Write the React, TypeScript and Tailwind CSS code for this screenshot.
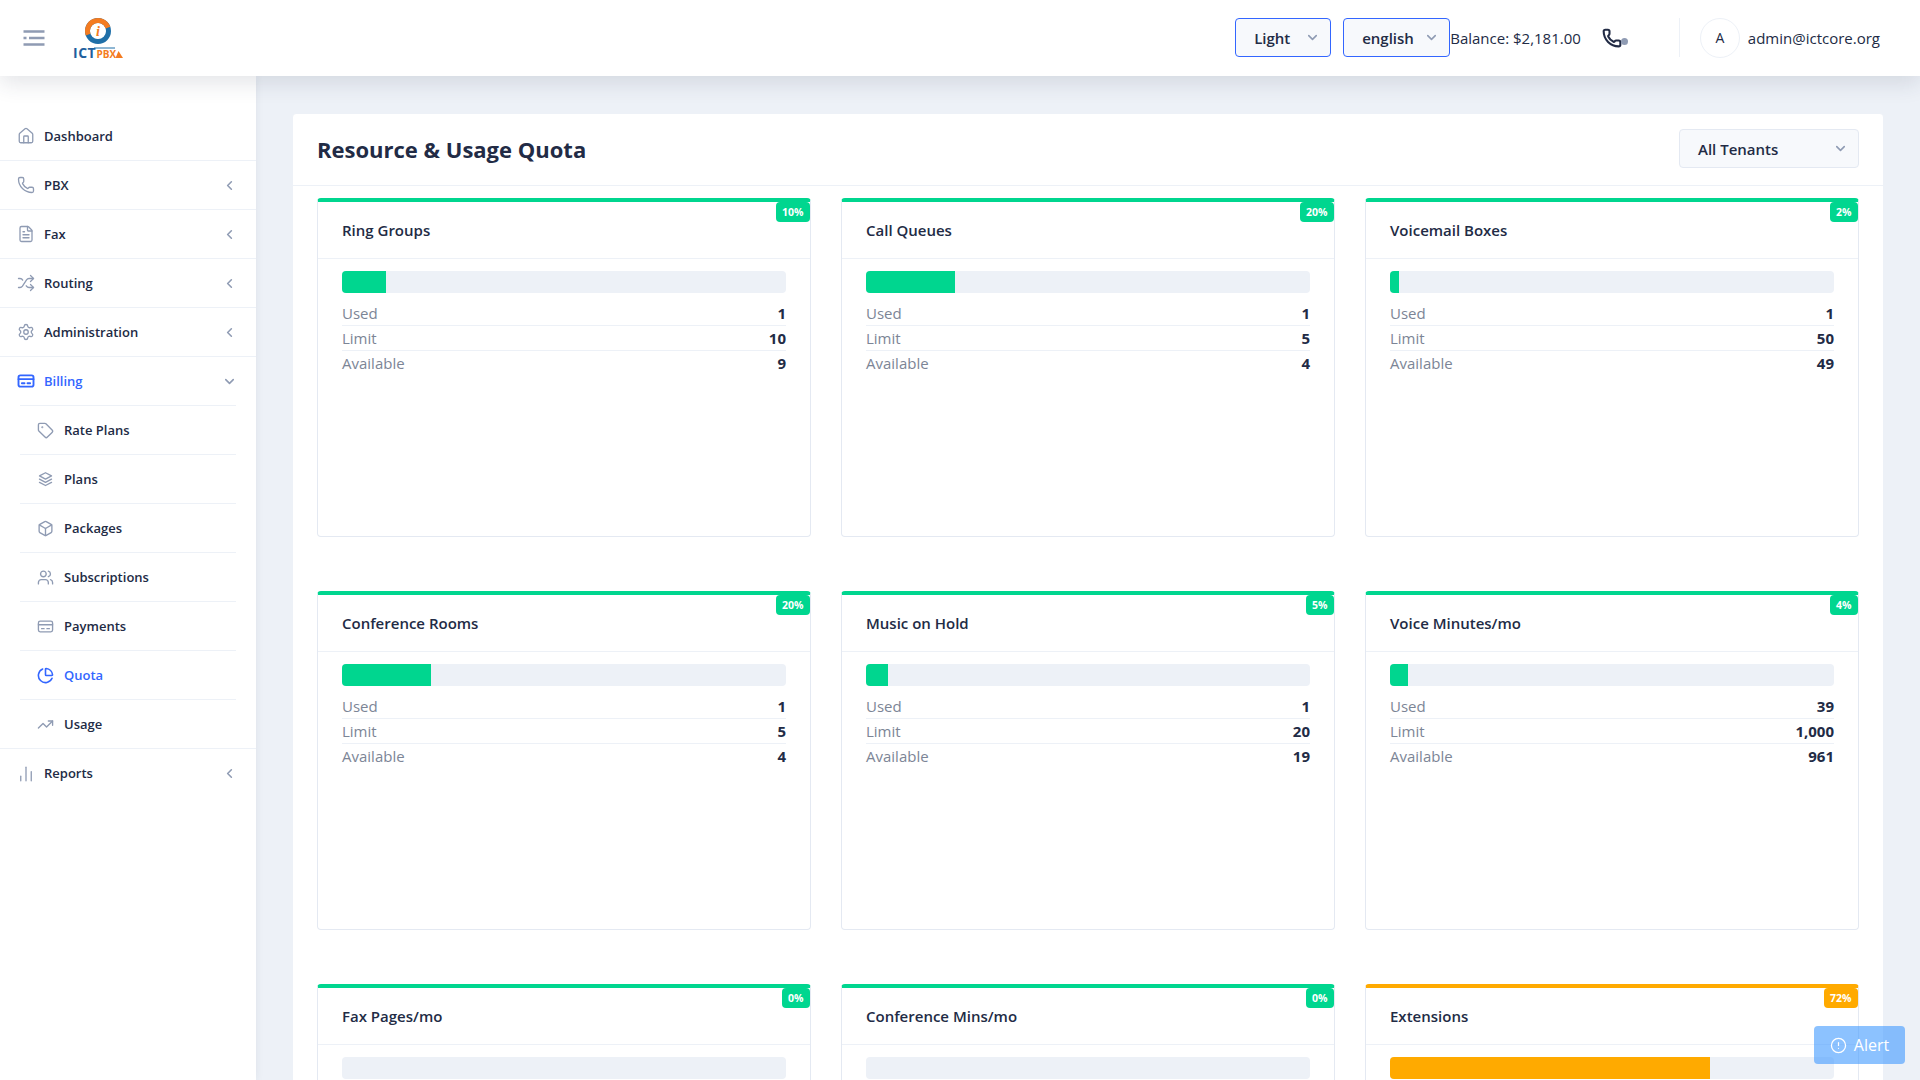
import React from 'react';
import {
  AlertCircle,
  BarChart2,
  Box,
  ChevronDown,
  ChevronLeft,
  FileText,
  Home,
  Phone,
  PieChart,
  Settings,
  Shuffle,
  Tag,
  TrendingUp,
  Users,
} from 'lucide-react';

const FONT = 'font-["Open_Sans",sans-serif]';

type IconProps = { size?: number; strokeWidth?: number; className?: string };

const CardIcon = ({ size = 18, strokeWidth = 2, className }: IconProps) => (
  <svg width={size} height={size} viewBox="0 0 24 24" fill="none" stroke="currentColor" strokeWidth={strokeWidth} strokeLinecap="round" strokeLinejoin="round" className={className}>
    <rect x="2" y="4.5" width="20" height="15" rx="2.5" />
    <path d="M2 9.5h20M6.5 15h3.5M14 15h3.5" />
  </svg>
);

const StackIcon = ({ size = 18, strokeWidth = 2, className }: IconProps) => (
  <svg width={size} height={size} viewBox="0 0 24 24" fill="none" stroke="currentColor" strokeWidth={strokeWidth} strokeLinecap="round" strokeLinejoin="round" className={className}>
    <path d="M12 2.5 20.5 7 12 11.5 3.5 7z" />
    <path d="M3.5 11.5 12 16l8.5-4.5" />
    <path d="M3.5 16 12 20.5l8.5-4.5" />
  </svg>
);

const topItems = [
  { label: 'Dashboard', icon: Home },
  { label: 'PBX', icon: Phone, arrow: true },
  { label: 'Fax', icon: FileText, arrow: true },
  { label: 'Routing', icon: Shuffle, arrow: true },
  { label: 'Administration', icon: Settings, arrow: true },
];

const billingItems = [
  { label: 'Rate Plans', icon: Tag },
  { label: 'Plans', icon: StackIcon },
  { label: 'Packages', icon: Box },
  { label: 'Subscriptions', icon: Users },
  { label: 'Payments', icon: CardIcon },
  { label: 'Quota', icon: PieChart, active: true },
  { label: 'Usage', icon: TrendingUp },
];

const quotas = [
  { title: 'Ring Groups', pct: 10, used: '1', limit: '10', available: '9' },
  { title: 'Call Queues', pct: 20, used: '1', limit: '5', available: '4' },
  { title: 'Voicemail Boxes', pct: 2, used: '1', limit: '50', available: '49' },
  { title: 'Conference Rooms', pct: 20, used: '1', limit: '5', available: '4' },
  { title: 'Music on Hold', pct: 5, used: '1', limit: '20', available: '19' },
  { title: 'Voice Minutes/mo', pct: 4, used: '39', limit: '1,000', available: '961' },
  { title: 'Fax Pages/mo', pct: 0, used: '0', limit: '100', available: '100' },
  { title: 'Conference Mins/mo', pct: 0, used: '0', limit: '100', available: '100' },
  { title: 'Extensions', pct: 72, used: '36', limit: '50', available: '14', warn: true },
];

const Logo = () => (
  <svg width="52" height="44" viewBox="0 0 52 44" className="ml-[26px]">
    <circle cx="26" cy="15" r="10.5" fill="none" stroke="#1f6fa8" strokeWidth="5" />
    <circle cx="26" cy="15" r="10.5" fill="none" stroke="#f47b20" strokeWidth="5" strokeDasharray="33 33" transform="rotate(160 26 15)" />
    <circle cx="26" cy="15" r="7.5" fill="#fff" />
    <text x="26" y="20" textAnchor="middle" fontSize="14" fontWeight="700" fontStyle="italic" fill="#f47b20" fontFamily="Liberation Serif, serif">i</text>
    <text x="1" y="42" fontSize="14" fontWeight="700" fill="#1f5f9e" fontFamily="Open Sans, sans-serif" letterSpacing="0.5">ICT</text>
    <text x="24.5" y="42" fontSize="10" fontWeight="700" fill="#f47b20" fontFamily="Open Sans, sans-serif">PBX</text>
    <path d="M22 32h21" stroke="#1f6fa8" strokeWidth="1" />
    <path d="M43.5 42l3-7 4.5 7z" fill="#f47b20" />
  </svg>
);

const Select = ({ label, width, focus }: { label: string; width: string; focus?: boolean }) => (
  <div
    className={`flex h-[39px] items-center justify-between rounded-[4px] border bg-[#f7f9fc] pl-[18px] pr-[10px] text-[15px] font-semibold text-[#222b45] ${width} ${
      focus ? 'border-[#3366ff]' : 'border-[#e4e9f2]'
    }`}
  >
    <span className="pt-px">{label}</span>
    <ChevronDown size={15} strokeWidth={2.5} className="text-[#8f9bb3]" />
  </div>
);

const StatRow = ({ label, value, last }: { label: string; value: string; last?: boolean }) => (
  <div className={`flex h-[25px] items-center justify-between text-[15px] ${last ? '' : 'border-b border-[#edf1f7]'}`}>
    <span className="text-[#7c8596]">{label}</span>
    <span className="font-bold text-[#222b45]">{value}</span>
  </div>
);

const QuotaCard = ({ q }: { q: (typeof quotas)[number] }) => (
  <div className={`relative h-[339px] rounded-[4px] border border-t-4 border-[#e4e9f2] bg-white ${q.warn ? 'border-t-[#ffaa00]' : 'border-t-[#00d68f]'}`}>
    <span className={`absolute right-0 top-0 rounded-[4px] px-[6.5px] py-[3px] text-[10.5px] font-bold leading-[14px] text-white ${q.warn ? 'bg-[#ffaa00]' : 'bg-[#00d68f]'}`}>
      {q.pct}%
    </span>
    <div className="flex h-[57px] items-center border-b border-[#edf1f7] px-6 text-[15px] font-semibold text-[#222b45]">{q.title}</div>
    <div className="px-6 pt-3">
      <div className="h-[22px] overflow-hidden rounded-[4px] bg-[#edf1f7]">
        <div className={`h-full ${q.warn ? 'bg-[#ffaa00]' : 'bg-[#00d68f]'}`} style={{ width: `${q.pct}%` }} />
      </div>
      <div className="mt-[8px]">
        <StatRow label="Used" value={q.used} />
        <StatRow label="Limit" value={q.limit} />
        <StatRow label="Available" value={q.available} last />
      </div>
    </div>
  </div>
);

export default function App() {
  return (
    <div className={`relative flex h-screen flex-col overflow-hidden bg-[#edf1f7] ${FONT}`}>
      <header className="relative z-10 flex h-[76px] shrink-0 items-center bg-white pb-px pr-[40px] shadow-[0_8px_20px_rgba(44,51,73,0.12)]">
        <svg width="24" height="24" viewBox="0 0 24 24" className="ml-[22px] text-[#8f9bb3]" fill="none" stroke="currentColor" strokeWidth="2.4">
          <path d="M1.5 5.5h21M1.5 12h3M7 12h15.5M1.5 18.5h21" />
        </svg>
        <Logo />
        <div className="ml-auto flex items-center text-[15px] text-[#222b45]">
          <Select label="Light" width="w-[96px]" focus />
          <div className="w-3" />
          <Select label="english" width="w-[107px]" focus />
          <span className="whitespace-nowrap pt-px">Balance: $2,181.00</span>
          <div className="relative ml-[21px] h-[20px] w-[77px]">
            <Phone size={20} strokeWidth={2.5} className="text-[#222b45]" />
            <span className="absolute left-[19px] top-[10px] h-[7px] w-[7px] rounded-full bg-[#8f9bb3]" />
          </div>
          <div className="h-[39px] w-px bg-[#edf1f7]" />
          <div className="ml-[20px] flex h-[40px] w-[40px] items-center justify-center rounded-full border border-[#edf1f7] text-[14px]">A</div>
          <span className="ml-[8px] pt-px">admin@ictcore.org</span>
        </div>
      </header>

      <div className="flex min-h-0 flex-1">
        <aside className="w-[256px] shrink-0 bg-white pt-[36px] text-[13px] font-semibold text-[#222b45] shadow-[0_0_8px_rgba(44,51,73,0.08)]">
          {topItems.map(({ label, icon: Icon, arrow }) => (
            <div key={label} className="flex h-[49px] items-center border-b border-[#edf1f7] pl-[17px] pr-[19px]">
              <Icon size={18} strokeWidth={1.75} className="text-[#8f9bb3]" />
              <span className="ml-[9px] flex-1 pt-px">{label}</span>
              {arrow && <ChevronLeft size={15} strokeWidth={2.5} className="text-[#8f9bb3]" />}
            </div>
          ))}
          <div className="flex h-[48px] items-center pl-[17px] pr-[19px] text-[#3366ff]">
            <CardIcon size={18} strokeWidth={2.5} />
            <span className="ml-[9px] flex-1 pt-px">Billing</span>
            <ChevronDown size={15} strokeWidth={2.5} className="text-[#8f9bb3]" />
          </div>
          <div className="border-b border-[#edf1f7] px-5">
            {billingItems.map(({ label, icon: Icon, active }) => (
              <div key={label} className={`flex h-[49px] items-center border-t border-[#edf1f7] pl-[17px] ${active ? 'text-[#3366ff]' : ''}`}>
                <Icon size={17} strokeWidth={active ? 2.25 : 1.9} className={active ? '' : 'text-[#8f9bb3]'} />
                <span className="ml-[10px] pt-px">{label}</span>
              </div>
            ))}
          </div>
          <div className="flex h-[49px] items-center pl-[17px] pr-[19px]">
            <BarChart2 size={18} strokeWidth={1.75} className="text-[#8f9bb3]" />
            <span className="ml-[9px] flex-1">Reports</span>
            <ChevronLeft size={15} strokeWidth={2.5} className="text-[#8f9bb3]" />
          </div>
        </aside>

        <main className="min-w-0 flex-1 overflow-hidden pl-[36px] pr-[36px] pt-[37px]">
          <div className="rounded-[4px] border border-[#edf1f7] bg-white">
            <div className="flex h-[72px] items-center justify-between border-b border-[#edf1f7] pb-[2px] pl-[24px] pr-[24px]">
              <h1 className="pt-[2px] text-[22px] font-bold text-[#222b45]">Resource &amp; Usage Quota</h1>
              <Select label="All Tenants" width="w-[180px]" />
            </div>
            <div className="grid grid-cols-3 gap-x-[30px] gap-y-[54px] px-6 pt-3">
              {quotas.map((q) => (
                <QuotaCard key={q.title} q={q} />
              ))}
            </div>
          </div>
        </main>
      </div>

      <div className="absolute right-[15px] top-[1026px] z-20 flex h-[38px] w-[91px] items-center justify-center gap-[7px] rounded-[4px] bg-[#3f99ff]/60 text-[16px] text-white">
        <AlertCircle size={17} strokeWidth={1.75} />
        <span>Alert</span>
      </div>
    </div>
  );
}
